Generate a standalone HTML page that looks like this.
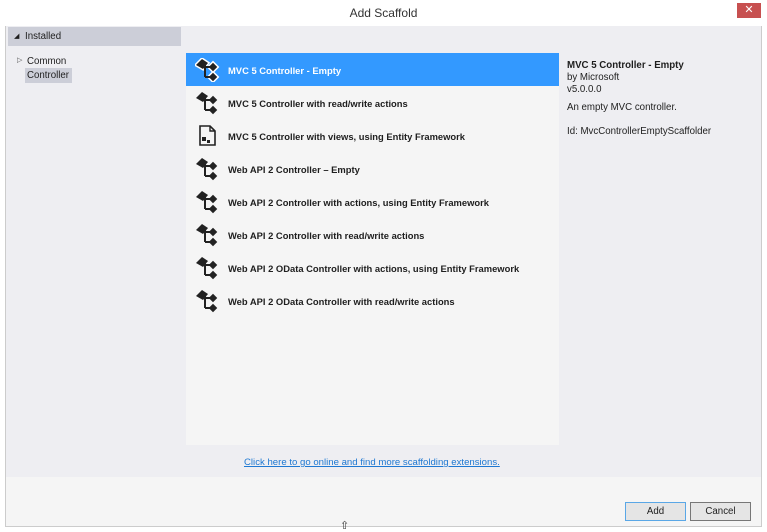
<!DOCTYPE html>
<html><head><meta charset="utf-8"><style>
*{margin:0;padding:0;box-sizing:border-box}
body{width:767px;height:531px;background:#fff;font-family:"Liberation Sans",sans-serif;font-size:9.7px;color:#1e1e1e;position:relative;overflow:hidden}
.abs{position:absolute}
.title{left:0;top:0;width:767px;height:26px;text-align:center;font-size:12px;line-height:26px;color:#333}
.close{left:737px;top:3px;width:24px;height:15px;background:#c75050;color:#fff;text-align:center;font-size:11px;line-height:15px}
.frame{left:5px;top:26px;width:757px;height:501px;border:1px solid #ccc;border-top:none;background:#f5f5f5}
.gray{left:6px;top:26px;width:755px;height:451px;background:#eeeef2}
.hdr{left:8px;top:27px;width:173px;height:19px;background:#ccced8;line-height:19px;padding-left:17px}
.list{left:186px;top:53px;width:373px;height:392px;background:#f5f5f5}
.row{position:absolute;left:0;width:373px;height:33px;font-weight:bold;font-size:9.4px;line-height:35px;padding-left:42px}
.row svg{position:absolute;left:9px;top:5px}
.sel{background:#3399ff;color:#fff}
.btn{top:502px;width:61px;height:19px;border:1px solid #adadad;background:#e5e5e5;text-align:center;line-height:17px}
</style></head><body>
<div class="abs title">Add Scaffold</div>
<div class="abs close">✕</div>
<div class="abs frame"></div>
<div class="abs gray"></div>
<div class="abs hdr"><span style="position:absolute;left:6px;font-size:7px">◢</span>Installed</div>
<div class="abs" style="left:17px;top:56px;font-size:7px;color:#555">▷</div>
<div class="abs" style="left:27px;top:56px">Common</div>
<div class="abs" style="left:25px;top:68px;width:47px;height:15px;background:#ccced8;padding-left:2px;line-height:15px">Controller</div>

<div class="abs list">
<svg width="0" height="0" style="position:absolute"><defs>
<g id="ic"><polygon points="1,7 7,1 13,5 8,11" fill="currentColor"/><path d="M10,7 V19 M10,9 H17 M10,19 H17" stroke="currentColor" stroke-width="2" fill="none"/><rect x="15" y="6" width="6" height="6" transform="rotate(45 18 9)" fill="currentColor"/><rect x="15" y="16" width="6" height="6" transform="rotate(45 18 19)" fill="currentColor"/></g>
</defs></svg>
<div class="row sel" style="top:0"><svg width="26" height="24" style="color:#222"><g stroke="#fff" stroke-width="3"><use href="#ic"/></g><use href="#ic"/></svg>MVC 5 Controller - Empty</div>
<div class="row" style="top:33px"><svg width="26" height="24" style="color:#222"><use href="#ic"/></svg>MVC 5 Controller with read/write actions</div>
<div class="row" style="top:66px"><svg width="26" height="24"><path d="M5,2 H15 L20,7 V21 H5 Z" fill="none" stroke="#222" stroke-width="1.6"/><path d="M15,2 V7 H20" fill="none" stroke="#222" stroke-width="1.4"/><rect x="7" y="13" width="4" height="4" fill="#222"/><rect x="12" y="16" width="3" height="3" fill="#222"/></svg>MVC 5 Controller with views, using Entity Framework</div>
<div class="row" style="top:99px"><svg width="26" height="24" style="color:#222"><use href="#ic"/></svg>Web API 2 Controller – Empty</div>
<div class="row" style="top:132px"><svg width="26" height="24" style="color:#222"><use href="#ic"/></svg>Web API 2 Controller with actions, using Entity Framework</div>
<div class="row" style="top:165px"><svg width="26" height="24" style="color:#222"><use href="#ic"/></svg>Web API 2 Controller with read/write actions</div>
<div class="row" style="top:198px"><svg width="26" height="24" style="color:#222"><use href="#ic"/></svg>Web API 2 OData Controller with actions, using Entity Framework</div>
<div class="row" style="top:231px"><svg width="26" height="24" style="color:#222"><use href="#ic"/></svg>Web API 2 OData Controller with read/write actions</div>
</div>

<div class="abs" style="left:567px;top:60px;line-height:12px">
<b>MVC 5 Controller - Empty</b><br>by Microsoft<br>v5.0.0.0
<div style="margin-top:6px">An empty MVC controller.</div>
<div style="margin-top:12px">Id: MvcControllerEmptyScaffolder</div>
</div>

<div class="abs" style="left:244px;top:457px;font-size:9.6px;color:#1e78d2;text-decoration:underline">Click here to go online and find more scaffolding extensions.</div>

<div class="abs btn" style="left:625px;border-color:#5aa7e6">Add</div>
<div class="abs btn" style="left:690px;border-color:#777">Cancel</div>
<div class="abs" style="left:340px;top:519px;font-size:11px;color:#333">⇧</div>
</body></html>
